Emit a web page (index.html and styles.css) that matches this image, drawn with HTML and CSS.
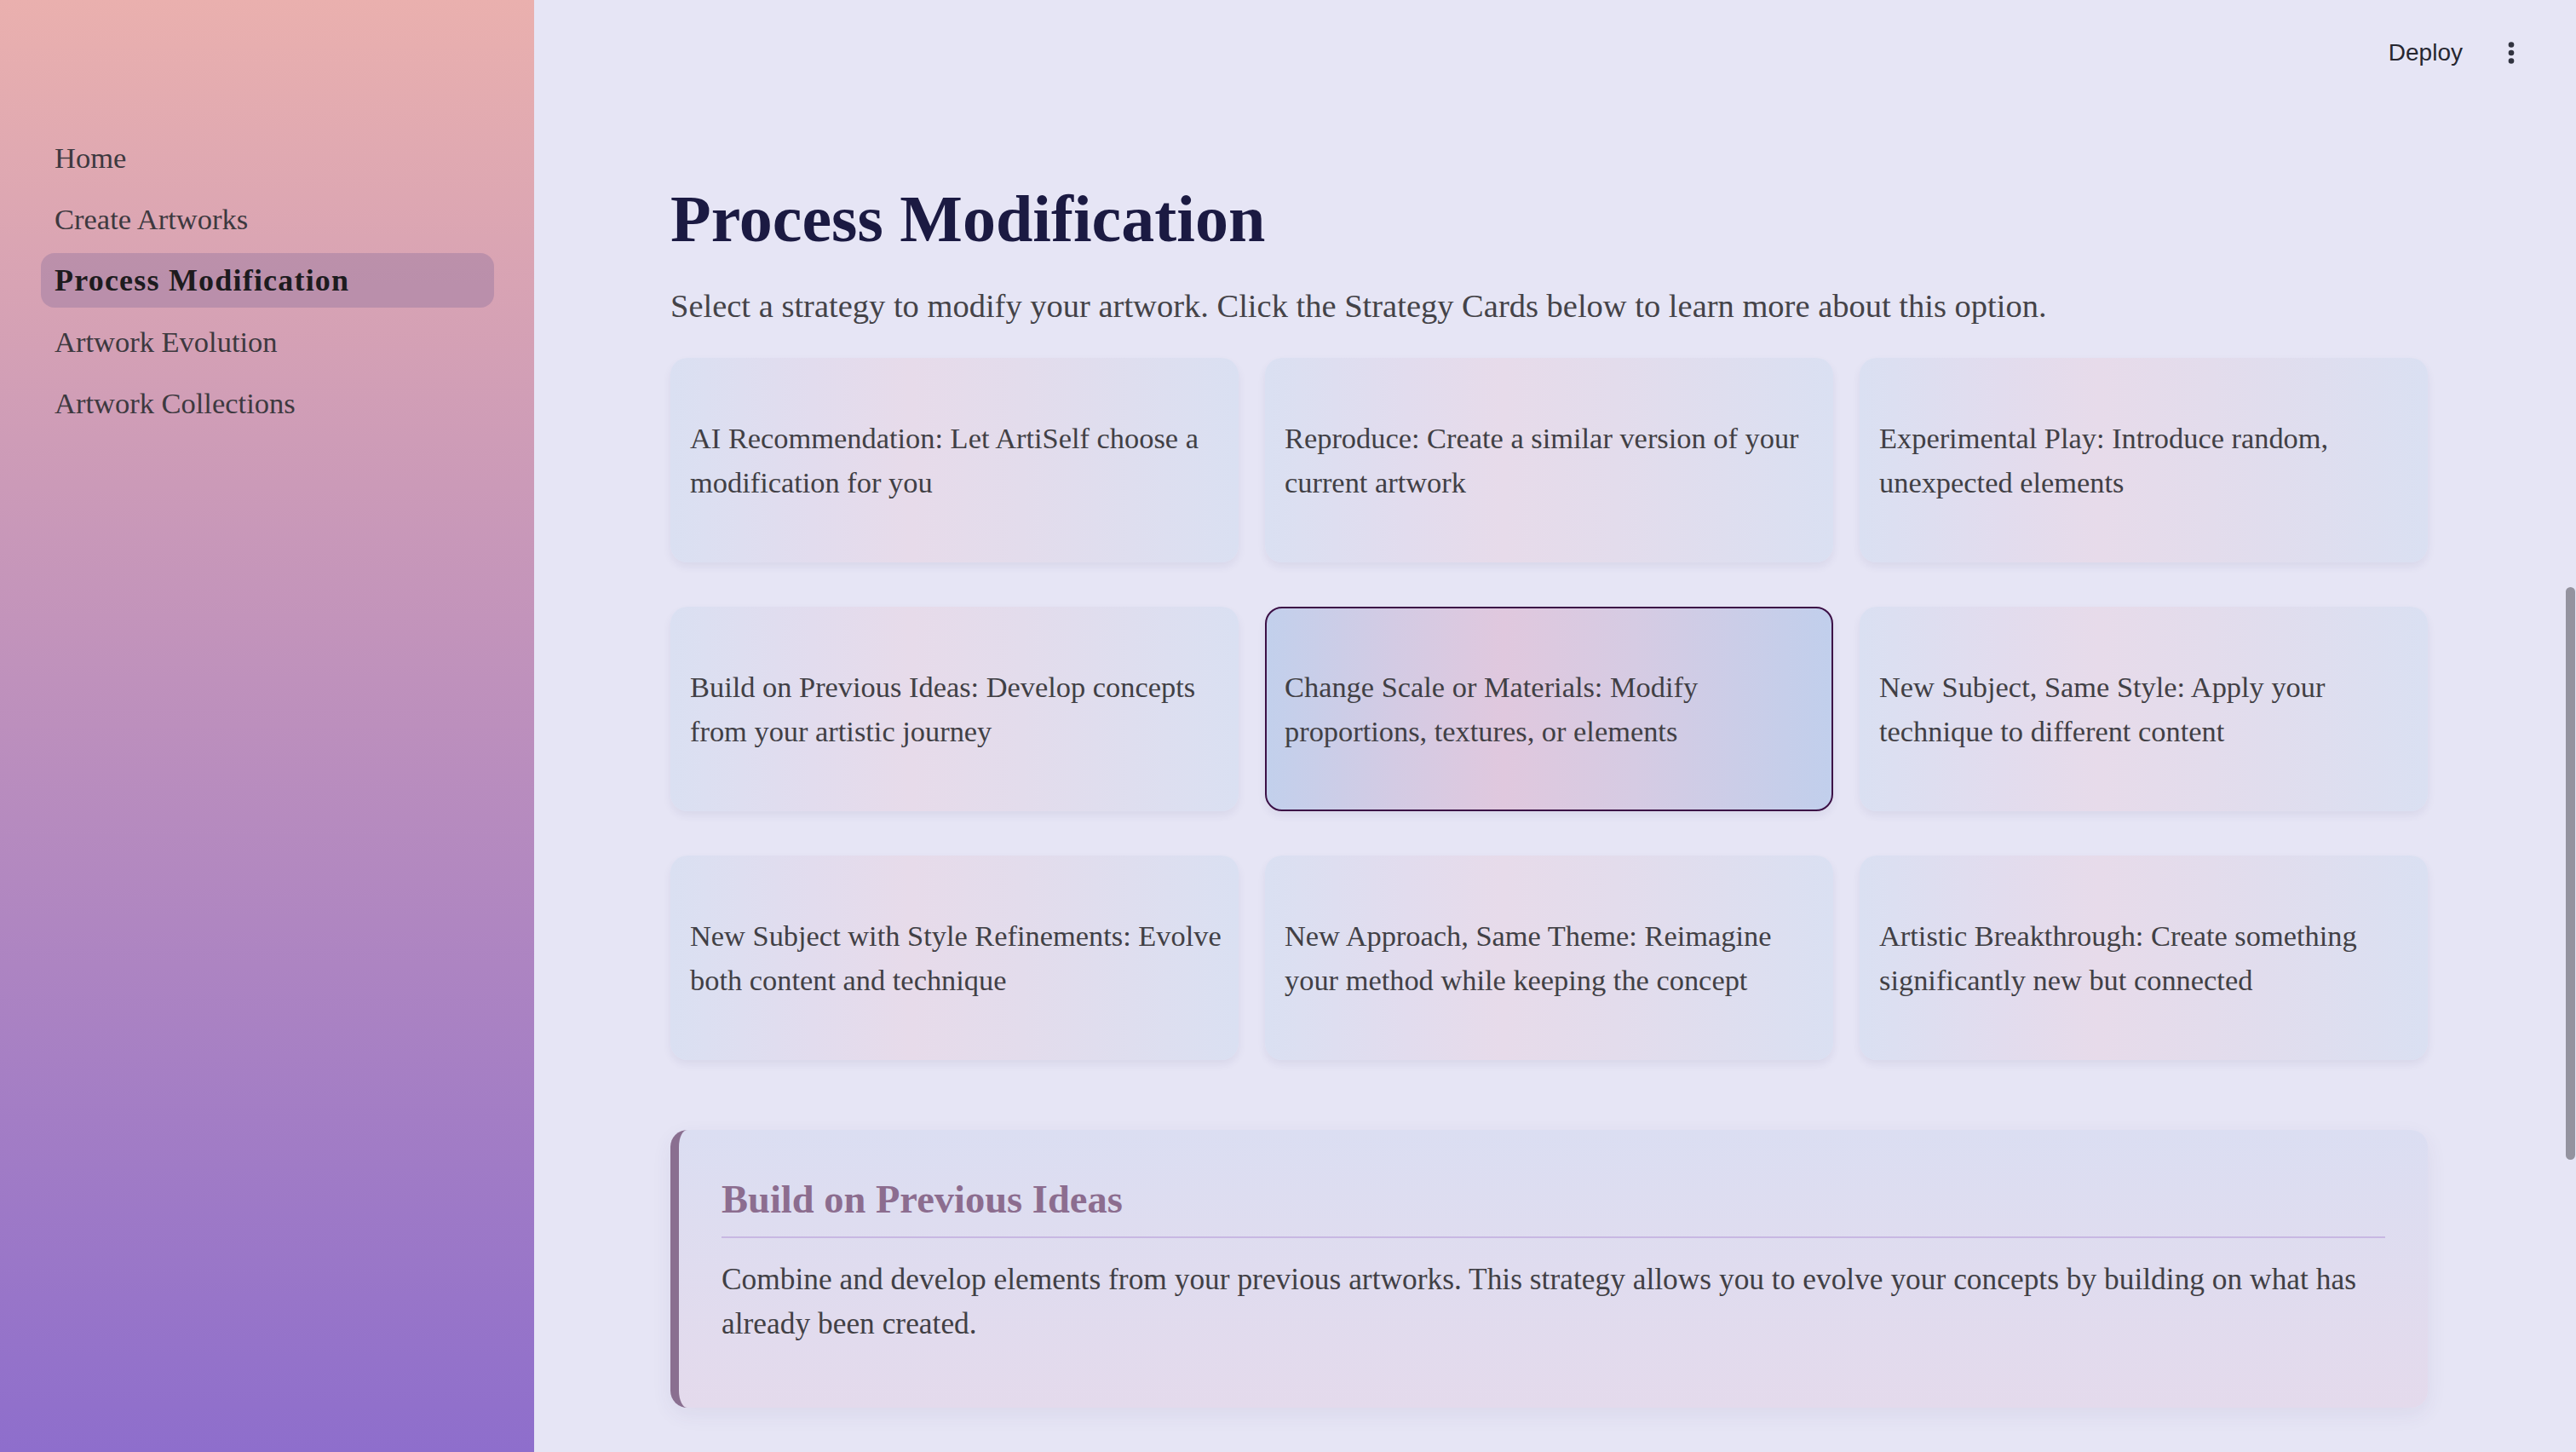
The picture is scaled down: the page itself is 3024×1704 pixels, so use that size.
FILE: index.html
```html
<!DOCTYPE html>
<html lang="en">
<head>
<meta charset="utf-8">
<title>Process Modification</title>
<link rel="stylesheet" href="styles.css">
</head>
<body>
<div class="app">
  <aside class="sidebar">
    <nav class="nav">
      <a class="nav-item">Home</a>
      <a class="nav-item">Create Artworks</a>
      <a class="nav-item active">Process Modification</a>
      <a class="nav-item">Artwork Evolution</a>
      <a class="nav-item">Artwork Collections</a>
    </nav>
  </aside>
  <main class="main">
    <header class="topbar">
      <span class="deploy">Deploy</span>
      <span class="kebab">
        <svg width="10" height="30" viewBox="0 0 10 30"><circle cx="5" cy="5.5" r="3.3" fill="#31333f"/><circle cx="5" cy="15" r="3.3" fill="#31333f"/><circle cx="5" cy="24.5" r="3.3" fill="#31333f"/></svg>
      </span>
    </header>
    <section class="content">
      <h1 class="title">Process Modification</h1>
      <p class="subtitle">Select a strategy to modify your artwork. Click the Strategy Cards below to learn more about this option.</p>
      <div class="grid">
        <div class="card">AI Recommendation: Let ArtiSelf choose a modification for you</div>
        <div class="card">Reproduce: Create a similar version of your current artwork</div>
        <div class="card">Experimental Play: Introduce random, unexpected elements</div>
        <div class="card">Build on Previous Ideas: Develop concepts from your artistic journey</div>
        <div class="card selected">Change Scale or Materials: Modify proportions, textures, or elements</div>
        <div class="card">New Subject, Same Style: Apply your technique to different content</div>
        <div class="card">New Subject with Style Refinements: Evolve both content and technique</div>
        <div class="card">New Approach, Same Theme: Reimagine your method while keeping the concept</div>
        <div class="card">Artistic Breakthrough: Create something significantly new but connected</div>
      </div>
      <div class="info">
        <h3 class="info-title">Build on Previous Ideas</h3>
        <p class="info-text">Combine and develop elements from your previous artworks. This strategy allows you to evolve your concepts by building on what has already been created.</p>
      </div>
    </section>
    <div class="scroll-thumb"></div>
  </main>
</div>
</body>
</html>
```
FILE: styles.css
```css
html, body {
  margin: 0;
  padding: 0;
  height: 100%;
  overflow: hidden;
}
body {
  background: #e6e5f5;
  font-family: "Liberation Serif", "Times New Roman", serif;
}
.app {
  display: flex;
  height: 1704px;
}
.sidebar {
  width: 627px;
  flex: none;
  background: linear-gradient(180deg, #eab0ae 0%, #8e6ecc 100%);
}
.nav {
  display: flex;
  flex-direction: column;
  gap: 8px;
  padding: 153px 47px 0 48px;
}
.nav-item {
  height: 64px;
  display: flex;
  align-items: center;
  padding-left: 16px;
  border-radius: 16px;
  font-family: "Liberation Serif", Georgia, serif;
  font-size: 34.5px;
  color: #3d393f;
}
.nav-item.active {
  background: rgba(150, 120, 160, 0.45);
  font-weight: bold;
  font-size: 36px;
  letter-spacing: 1.2px;
  color: #1d1b1e;
}
.main {
  flex: 1;
  display: flex;
  flex-direction: column;
  position: relative;
}
.topbar {
  height: 120px;
  box-sizing: border-box;
  padding-top: 4px;
  display: flex;
  align-items: center;
  justify-content: flex-end;
  padding-right: 56px;
}
.deploy {
  font-family: "Liberation Sans", Arial, sans-serif;
  font-size: 28px;
  color: #262730;
  margin-right: 37px;
}
.kebab {
  width: 40px;
  height: 40px;
  display: flex;
  align-items: center;
  justify-content: center;
}
.content {
  width: 2063px;
  margin-left: 160px;
  padding-top: 90px;
}
.title {
  margin: 0;
  font-size: 78px;
  line-height: 94px;
  font-weight: bold;
  color: #1b1a42;
}
.subtitle {
  margin: 29px 0 0;
  font-size: 38.5px;
  line-height: 52px;
  color: #444348;
}
.grid {
  margin-top: 35px;
  display: grid;
  grid-template-columns: repeat(3, 1fr);
  grid-auto-rows: 240px;
  column-gap: 31px;
  row-gap: 52px;
}
.card {
  display: flex;
  align-items: center;
  padding: 0 20px 0 23px;
  border-radius: 20px;
  font-size: 34.4px;
  line-height: 52px;
  color: #414045;
  background: linear-gradient(90deg, #dae0f2 0%, #e2dcee 25%, #e7dbea 42%, #e3dcec 62%, #dae0f2 100%);
  box-shadow: 0 5px 10px rgba(70, 60, 110, 0.08);
}
.card.selected {
  border: 2px solid #3c1046;
  padding: 0 18px 0 21px;
  background: linear-gradient(90deg, #c2d0ec 0%, #d3cbe4 22%, #e0c8de 42%, #d6cbe3 65%, #c1cfec 100%);
}
.info {
  margin-top: 82px;
  height: 326px;
  box-sizing: border-box;
  padding: 52px 50px 0 50px;
  border-left: 10px solid #8a6f90;
  border-radius: 20px;
  background: linear-gradient(180deg, #dbdef2 0%, #e4daec 100%);
  box-shadow: 0 8px 24px rgba(70, 60, 110, 0.07);
}
.info-title {
  margin: 0;
  font-size: 46.5px;
  line-height: 60px;
  font-weight: bold;
  color: #8c6d8f;
  padding-bottom: 13px;
  border-bottom: 2px solid #c8b8e2;
}
.info-text {
  margin: 22px 0 0;
  font-size: 35.4px;
  line-height: 52px;
  color: #414045;
}
.scroll-thumb {
  position: absolute;
  right: 1px;
  top: 689px;
  width: 11px;
  height: 672px;
  border-radius: 6px;
  background: #94939f;
}
```
